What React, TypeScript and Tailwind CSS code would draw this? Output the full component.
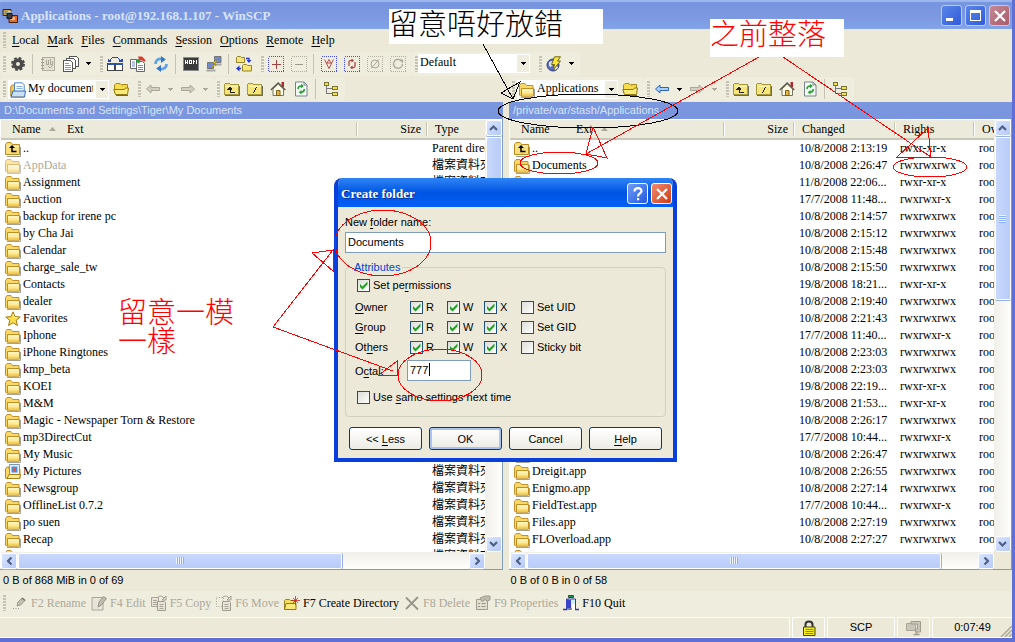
import type { ReactNode } from "react";
import { clsx } from "clsx";

type IconProps = { className?: string };

function Svg({ children, crisp, className }: { children: ReactNode; crisp?: boolean; className?: string }) {
    return (
        <svg
            viewBox="0 0 16 16"
            className={clsx("h-4 w-4 shrink-0", className)}
            fill="none"
            shapeRendering={crisp ? "crispEdges" : undefined}
            aria-hidden="true"
        >
            {children}
        </svg>
    );
}

/* ---------- Folder icons ---------- */

function FolderIcon({ className }: IconProps) {
    return (
        <Svg className={className}>
            <path d="M2 15.500h13.500V7" stroke="#a5a294" />
            <path d="M.5 13V3.500l1.500-2h4l1.500 2h6.500v10.500H1.500z" fill="#f8d867" stroke="#c3922a" />
            <path d="M2.500 14V6.500h12v7.500z" fill="#fdeb9a" stroke="#c08f22" />
            <path d="M3.500 8h10" stroke="#fffbe0" />
            <path d="M3 12.500h11" stroke="#f5d25c" strokeWidth="2" />
        </Svg>
    );
}

function ParentIcon() {
    return (
        <Svg>
            <path d="M2 15.500h13.500V6" stroke="#9c9a8c" />
            <path d="M.5 13.500V3.500l1.500-2h4l1.500 2h7v10z" fill="#f9df7c" stroke="#b98b1f" />
            <path d="M2 5.500h11.500" stroke="#fff3b8" />
            <path d="M4 7l3-3 3 3z" fill="#000" />
            <path d="M7 6v4.500h4.500" stroke="#000" strokeWidth="1.500" />
        </Svg>
    );
}

function StarIcon() {
    return (
        <Svg>
            <path
                d="M8 .8l2 4.800 5.200.4-4 3.400 1.300 5.100L8 11.800l-4.500 2.700 1.300-5.100-4-3.400L6 5.600z"
                fill="#fbdc4a"
                stroke="#a87a10"
            />
            <path d="M8 3l1.200 3.500 3 .5" stroke="#fff6b0" />
        </Svg>
    );
}

function PicturesIcon() {
    return (
        <Svg>
            <path d="M.5 14V5l1.500-2h2v2h11v9.500H1z" fill="#f8d867" stroke="#b98b1f" />
            <path d="M4.500.5h10v10h-10z" fill="#e9f3fb" stroke="#7b97b5" />
            <path d="M6.500 2.500h6v6h-6z" fill="#4c8fdc" />
            <path d="M8 4h3v3H8z" fill="#e2583c" />
            <path d="M2 14.500l2-4h11.500l-1 4z" fill="#fdeb9a" stroke="#b07f14" />
        </Svg>
    );
}

function DocsFolderIcon() {
    return (
        <Svg>
            <path d="M.8 14V4.500L2.500 3h2v11z" fill="#f8c95a" stroke="#b47d1b" />
            <path d="M4.500.8h7.700l2 2v8.700H4.500z" fill="#fff" stroke="#4f86c8" />
            <path d="M6.500 4.500h6M6.500 6.500h6" stroke="#86b0e0" />
            <path d="M1 15l2-6h12.500l-1 6z" fill="#c9e0f7" stroke="#2f6cb4" />
            <path d="M.8 15.300h13.500" stroke="#c98b20" />
        </Svg>
    );
}

function OpenFolderIcon() {
    return (
        <Svg>
            <path d="M1.500 12V4l1.500-1.500h4L8.500 4H13v8" fill="#f7dd4e" stroke="#a78b17" />
            <path d="M9 3.500h5.500V9" fill="#f2d64b" stroke="#a78b17" />
            <path d="M2.500 13.500L.8 8.500h10.500l1.200-1.500h3l-1 6.500z" fill="#f9e97a" stroke="#927a12" />
            <path d="M3 14.500h12" stroke="#6e6540" />
        </Svg>
    );
}

function BarFolder({ children }: { children: ReactNode }) {
    return (
        <Svg crisp>
            <path d="M1 14h14V5" stroke="#6b6b50" />
            <path d="M.5 13.500v-10l1-1h4l1 1h8v10z" fill="#f6e67a" stroke="#a8983c" />
            <path d="M2 5.500h12" stroke="#fff7ab" />
            {children}
        </Svg>
    );
}

function UpFolderIcon() {
    return (
        <BarFolder>
            <path d="M3.500 8.500l2.500-3 2.500 3z" fill="#222" />
            <path d="M6 8v3.500h5" stroke="#222" />
        </BarFolder>
    );
}

function RootFolderIcon() {
    return (
        <BarFolder>
            <path d="M9.500 6l-3 6" stroke="#222" />
        </BarFolder>
    );
}

function HomeIcon() {
    return (
        <Svg>
            <path d="M11.500 1h2.500v5h-2.500z" fill="#b3262b" />
            <path d="M3 8v6.500h10.500V8L8.200 3z" fill="#fdfbe8" stroke="#77745f" />
            <path d="M.8 9L8.200 1.800 15.300 9" stroke="#5b594b" strokeWidth="1.300" />
            <path d="M6.500 9.500h3.500v5H6.500z" fill="#e8b53f" stroke="#7b5e18" />
        </Svg>
    );
}

function RefreshPageIcon() {
    return (
        <Svg>
            <path d="M2.500 1h8.500l3 3v11H2.500z" fill="#f6fbf8" stroke="#76848c" />
            <path d="M11 1v3h3" stroke="#76848c" />
            <path d="M5 8c0-2 1.500-3 3.500-3" stroke="#21a02c" strokeWidth="1.600" />
            <path d="M8 2.800L10.800 5 8 7.200z" fill="#21a02c" />
            <path d="M11.300 8c0 2-1.300 3.200-3.300 3.200" stroke="#21a02c" strokeWidth="1.600" />
            <path d="M8.500 9L5.700 11.200l2.800 2.200z" fill="#21a02c" />
        </Svg>
    );
}

function TreeIcon() {
    return (
        <Svg crisp>
            <path d="M3.500 5v7.500h5M3.500 7.500h5" stroke="#777" />
            <path d="M1.500 1.500h4v3h-4zM9.500 5.500h5v3h-5zM9.500 11.500h5v3h-5z" fill="#f2e054" stroke="#7b7430" />
        </Svg>
    );
}

/* ---------- Main toolbar icons ---------- */

function AppIcon() {
    return (
        <Svg>
            <path d="M1 1.500h8v6H1z" fill="#d7a13f" stroke="#202a35" />
            <path d="M2.500 3h5v3h-5z" fill="#6ea19a" />
            <path d="M7 7.500h8.500v7H7z" fill="#df6b2b" stroke="#43200f" />
            <path d="M8.500 9h4.500v3H8.500z" fill="#f5b88b" />
            <path d="M5 5.500h5v5H5z" fill="#3a3e4c" stroke="#15181f" />
            <path d="M6 5V3.500h3V5" stroke="#cfd3da" />
        </Svg>
    );
}

function GearIcon() {
    return (
        <Svg>
            <circle cx="8" cy="8" r="3.800" stroke="#4a4a4a" strokeWidth="3.600" />
            <circle cx="8" cy="8" r="6" stroke="#4a4a4a" strokeWidth="2" strokeDasharray="2.700 2.010" />
        </Svg>
    );
}

function NotebookIcon() {
    return (
        <Svg crisp>
            <path d="M2.500 1.500h12v13h-12z" fill="#e4e1d2" stroke="#b0ad9f" />
            <path d="M1 3.500h3M1 6.500h3M1 9.500h3M1 12.500h3" stroke="#a09d90" />
            <path d="M6.500 4v4h2V4M10.500 3v5h2V5M8 10l2 2 3-3" stroke="#aaa798" />
        </Svg>
    );
}

function PagesIcon() {
    return (
        <Svg crisp>
            <path d="M6.500.5h7l2 2v8h-9z" fill="#fff" stroke="#555" />
            <path d="M3.500 2.500h7l2 2v8h-9z" fill="#fff" stroke="#555" />
            <path d="M.5 4.500h7l2 2v9h-9z" fill="#fff" stroke="#555" />
            <path d="M2 7.500h4M2 9.500h6M2 11.500h6M2 13.500h6" stroke="#8a94b8" />
        </Svg>
    );
}

function SplitIcon() {
    return (
        <Svg crisp>
            <path d="M.5 7.500h7v7h-7zM8.500 7.500h7v7h-7z" fill="#fff" stroke="#444" />
            <path d="M.5 7h7v2h-7zM8.500 7h7v2h-7z" fill="#2c51b8" />
            <path d="M3 4.500C3.500 2 5 1.500 8 1.500s4.500.5 5 3" stroke="#2c46c0" />
            <path d="M.5 2.500v3.500h4zM15.500 2.500v3.500h-4z" fill="#2c46c0" />
        </Svg>
    );
}

function TransferIcon() {
    return (
        <Svg>
            <path d="M.5 3.500h6v9h-6z" fill="#fff" stroke="#666" />
            <path d="M2 6h3M2 8h3M2 10h3" stroke="#6d8ad0" />
            <path d="M6.500 5.500h6l2 2v8h-8z" fill="#fff" stroke="#666" />
            <path d="M8 9.500h5M8 11.500h5M8 13.500h5" stroke="#6d8ad0" />
            <path d="M8 .5h4l3.500 3.500-1 2-3-2-2 1z" fill="#e03a30" />
            <path d="M5.500 3.500l4-.5 1 3-2.500 1.500z" fill="#22a03a" />
        </Svg>
    );
}

function SyncIcon() {
    return (
        <Svg>
            <path d="M2.500 8c0-3.500 2.500-5.500 6-5" stroke="#5ea2e8" strokeWidth="2.800" />
            <path d="M8 0L12.800 3.500 8 7z" fill="#2f78cc" />
            <path d="M13.500 8c0 3.500-2.500 5.500-6 5" stroke="#5ea2e8" strokeWidth="2.800" />
            <path d="M8 9L3.200 12.600 8 16z" fill="#2f78cc" />
        </Svg>
    );
}

function ConsoleIcon() {
    return (
        <Svg crisp>
            <path d="M.5 1.500h15v13H.5z" fill="#3b3b3b" stroke="#8b8b8b" />
            <path d="M2.500 4v4M4.500 4v4M2.500 6h2M6.500 4.500h2v3h-2zM10.500 8V4M10.500 4.500l2 2M13.500 8V4" stroke="#fff" />
        </Svg>
    );
}

function PuttyIcon() {
    return (
        <Svg>
            <path d="M8.500.5h6.500v6H8.500z" fill="#6f8ad6" stroke="#777" />
            <path d="M8.500 8.500h7" stroke="#a5a5a5" strokeWidth="2" />
            <path d="M1.500 6.500h6v6h-6z" fill="#6f8ad6" stroke="#777" />
            <path d="M.5 14.500h9" stroke="#a5a5a5" strokeWidth="2" />
            <path d="M13 3L6.500 7l3 .8L3 12.500 10.500 9 8 8z" fill="#fbe94a" stroke="#8b7a14" strokeWidth=".6" />
        </Svg>
    );
}

function SyncBrowseIcon() {
    return (
        <Svg>
            <path d="M.5 6.500V1.500l1-1h3l1 1h3v5z" fill="#f6e67a" stroke="#94852a" />
            <path d="M6.500 15v-5.500l1-1h3l1 1h4V15z" fill="#f6e67a" stroke="#94852a" />
            <path d="M10 2.500h3v2M5 12.500H2.500" stroke="#2336c8" strokeWidth="1.300" />
            <path d="M10.500 4h5L13 7zM3.500 9.500v6l-3.500-3z" fill="#2336c8" />
        </Svg>
    );
}

function Marked({ children, off }: { children: ReactNode; off?: boolean }) {
    return (
        <Svg>
            <path
                d="M.5.5h15v15H.5z"
                stroke={off ? "#b3b0a2" : "#4a4fe0"}
                strokeDasharray="1 1"
                shapeRendering="crispEdges"
            />
            {children}
        </Svg>
    );
}

const SelectAddIcon = () => (
    <Marked>
        <path d="M8.500 4v9M4 8.500h9" stroke="#a04040" shapeRendering="crispEdges" />
    </Marked>
);
const SelectRemoveIcon = () => (
    <Marked off>
        <path d="M4 8.500h8" stroke="#9d9a8c" shapeRendering="crispEdges" />
    </Marked>
);
const SelectFilterIcon = () => (
    <Marked>
        <path d="M3.500 3.500L8 12.500l4.500-9M5.500 7h5M6 7l2-3.500L10 7" stroke="#b04040" strokeWidth=".9" />
    </Marked>
);
const SelectInvertIcon = () => (
    <Marked>
        <path d="M5 10V6c0-1 .5-1.500 1.500-1.500H8M11 6v4c0 1-.5 1.500-1.500 1.500H8" stroke="#a83a3a" strokeWidth="1.200" />
        <path d="M7.500 2.500L10 4.500l-2.500 2zM8.500 9.500l-2.500 2 2.500 2z" fill="#a83a3a" />
    </Marked>
);
const SelectClearIcon = () => (
    <Marked off>
        <circle cx="8" cy="8" r="4" stroke="#aaa798" />
        <path d="M4 12.500L12 3.500" stroke="#aaa798" />
    </Marked>
);
const SelectRestoreIcon = () => (
    <Marked off>
        <path d="M11 4.500A4.500 4.500 0 1 0 12.500 8" stroke="#aaa798" strokeWidth="1.300" />
        <path d="M9 3.500h4v4z" fill="#aaa798" />
    </Marked>
);

function GlobeBoltIcon() {
    return (
        <Svg>
            <circle cx="7" cy="9" r="6" fill="#5870c8" stroke="#333a74" />
            <path d="M3 6l3-1 1 3-2 3-2-1zM8 11l3-1 1 2-3 2z" fill="#dde6dc" />
            <path d="M8.500.8h6L11.500 5h3L7 14l1.500-5.500H5.500z" fill="#f9e536" stroke="#6f6612" />
        </Svg>
    );
}

function ArrowIcon({ dir, active }: { dir: "left" | "right"; active?: boolean }) {
    return (
        <Svg className={dir === "right" ? "rotate-180" : ""}>
            <path
                d="M1.500 8L6 4v2.500h8.500v3H6V12z"
                fill={active ? "#a9d0f8" : "#d2cfc2"}
                stroke={active ? "#2d64b8" : "#aaa798"}
            />
        </Svg>
    );
}

/* ---------- Bottom bar icons ---------- */

const RenameIcon = () => (
    <Svg>
        <path d="M1 13.500h1M3.500 13.500h1M6 13.500h1" stroke="#999" />
        <path d="M5 11l1-4 4-4 3 2.500-4.500 4.500z" fill="#c2bfb2" stroke="#9b988b" />
        <path d="M10 3l3 2.500" stroke="#77756a" strokeWidth="1.500" />
    </Svg>
);
const EditIcon = () => (
    <Svg>
        <path d="M1 2.500h11v12.500H1z" fill="#e8e5d8" stroke="#a9a699" />
        <path d="M7 12l1-5 4.500-5.500 3 2-5 6.500z" fill="#bfbcae" stroke="#98958a" />
    </Svg>
);
const CopyIcon = () => (
    <Svg>
        <path d="M.5 2.500h7v9h-7z" fill="#e8e5d8" stroke="#a9a699" />
        <path d="M2 5.500h4M2 7.500h4M2 9.500h4" stroke="#aaa798" />
        <path d="M6.500 6.500h7l1 1v8h-8z" fill="#e8e5d8" stroke="#a09d90" />
        <path d="M8.500 9.500h4M8.500 11.500h4M8.500 13.500h4" stroke="#aaa798" />
        <path d="M6 3c2-2.500 5-2.500 7 0M11 5h4V1z" stroke="#a09d90" />
    </Svg>
);
const MoveIcon = () => (
    <Svg>
        <path d="M.5 2.500h7v9h-7z" stroke="#a9a699" strokeDasharray="1 1.500" />
        <path d="M6.500 6.500h7l1 1v8h-8z" fill="#e8e5d8" stroke="#a09d90" />
        <path d="M8.500 9.500h4M8.500 11.500h4M8.500 13.500h4" stroke="#aaa798" />
        <path d="M6 3c2-2.500 5-2.500 7 0M11 5h4V1z" stroke="#a09d90" />
    </Svg>
);
const NewDirIcon = () => (
    <Svg>
        <path d="M.5 14V5.500l1-1h4l1 1h5V14z" fill="#f6e05a" stroke="#94852a" />
        <path d="M.5 14.500l1.500-6h10v6z" fill="#f9e97a" stroke="#927a12" />
        <path d="M11.500 1v9M7 5.500h9M9 3l5 5M14 3L9 8" stroke="#d42525" strokeWidth=".8" />
    </Svg>
);
const DeleteIcon = () => (
    <Svg>
        <path d="M2 2.500l12 12M14 2L2 14" stroke="#98958a" strokeWidth="1.800" />
    </Svg>
);
const PropertiesIcon = () => (
    <Svg>
        <path d="M1.500 4.500h11v10h-11z" fill="#e2dfd1" stroke="#a09d90" />
        <path d="M3 8.500h2M3 11.500h2M6.500 8.500h4M6.500 11.500h4" stroke="#98958a" />
        <path d="M5 3l5-2h5v4l-3 1-2-1.500-3 2z" fill="#bfbcae" stroke="#a09d90" />
    </Svg>
);
const QuitIcon = () => (
    <Svg>
        <path d="M5.500 .5h5v2h-5z" fill="#1f9a4a" stroke="#1b5b33" />
        <path d="M3.500 4h9v10h-9z" fill="#c9f2fa" stroke="#3238a8" />
        <path d="M3 4l5 1v8l-5 .5z" fill="#3a44c8" />
        <path d="M0 14.500h4M12 14.500h4" stroke="#3238a8" strokeWidth="1.500" />
        <path d="M4 14.500l4-1.500v2z" fill="#777" />
        <path d="M9 9h3v6H9z" fill="#fff" />
    </Svg>
);

function LockIcon() {
    return (
        <Svg>
            <path d="M4.500 7V4.500C4.500.5 11.500.5 11.500 4.500V7" stroke="#333" strokeWidth="2" />
            <path d="M2.500 7h11.500v8.500H2.500z" fill="#f4ec1c" stroke="#4b4808" />
            <path d="M4.500 9.500h8M4.500 11.500h8M4.500 13.500h8" stroke="#8f8a10" />
        </Svg>
    );
}

function ClampIcon() {
    return (
        <Svg>
            <path d="M.5 3.500h9v7h-9z" fill="#c9c6b9" stroke="#aaa798" />
            <path d="M5 1.500h9.500V12H9.500V9h2V4H5z" fill="#c9c6b9" stroke="#a09d90" />
            <path d="M10.500 12v2M7.500 14.500h6" stroke="#a09d90" strokeWidth="1.500" />
        </Svg>
    );
}

/* ---------- Small parts ---------- */

function Grip() {
    return (
        <span className="h-4 w-[3px] shrink-0 bg-[repeating-linear-gradient(to_bottom,#c5c2b4_0_2px,transparent_2px_3px)]" />
    );
}

function Separator() {
    return <span className="mx-[3px] h-5 w-px shrink-0 bg-[#c5c2b2]" />;
}

function Band({ children }: { children: ReactNode }) {
    return <div className="flex h-6 items-center rounded-sm bg-[#efedde] px-[3px]">{children}</div>;
}

function ToolButton({ label, children }: { label: string; children: ReactNode }) {
    return (
        <button type="button" aria-label={label} className="flex h-6 w-[23px] shrink-0 items-center justify-center">
            {children}
        </button>
    );
}

function Caret({ off }: { off?: boolean }) {
    return (
        <svg viewBox="0 0 5 3" className="h-[3px] w-[5px]" shapeRendering="crispEdges" aria-hidden="true">
            <path d="M0 0h5L2.500 3z" fill={off ? "#aaa798" : "#000"} />
        </svg>
    );
}

function DropButton({ label, off }: { label: string; off?: boolean }) {
    return (
        <button type="button" aria-label={label} className="flex h-6 w-3 shrink-0 items-center justify-center">
            <Caret off={off} />
        </button>
    );
}

function Combo({ label, value, icon, className }: { label: string; value: string; icon?: ReactNode; className: string }) {
    return (
        <div className={clsx("relative h-[19px] bg-white", className)}>
            {icon && <span className="pointer-events-none absolute left-0.5 top-0.5">{icon}</span>}
            <select
                aria-label={label}
                className={clsx(
                    "block h-4 w-full appearance-none bg-transparent pr-4 text-xs leading-4 outline-none",
                    icon ? "pl-5" : "pl-0.5"
                )}
            >
                <option>{value}</option>
            </select>
            <span className="pointer-events-none absolute inset-y-px right-px flex w-3 items-center justify-center bg-[#efedde]">
                <Caret />
            </span>
        </div>
    );
}

function Chevron({ className }: { className?: string }) {
    return (
        <svg viewBox="0 0 9 6" className={clsx("h-1.5 w-[9px]", className)} aria-hidden="true">
            <path d="M1 5l3.500-3.500L8 5" fill="none" stroke="#4d6185" strokeWidth="2.200" />
        </svg>
    );
}

function ScrollButton({ label, turn }: { label: string; turn?: string }) {
    return (
        <button
            type="button"
            aria-label={label}
            className="flex h-4 w-4 shrink-0 items-center justify-center rounded-xs border border-white bg-gradient-to-br from-[#dbe5fe] to-[#b5caf8] shadow-[0_1px_0_#98b0e0]"
        >
            <Chevron className={turn} />
        </button>
    );
}

function VScroll({ thumb }: { thumb: string }) {
    return (
        <div className="flex w-[17px] shrink-0 flex-col items-center gap-px bg-gradient-to-r from-[#f0efea] to-[#fefefb]">
            <ScrollButton label="Scroll up" />
            <div className="w-4 flex-1">
                <div
                    className={clsx(
                        "flex items-center justify-center rounded-xs border border-white bg-gradient-to-r from-[#c9d8fc] to-[#b8ccf9] shadow-[0_1px_0_#98b0e0]",
                        thumb
                    )}
                >
                    <span className="h-2 w-[7px] bg-[repeating-linear-gradient(to_bottom,#eef4fe_0_1px,#8cb0f8_1px_2px)]" />
                </div>
            </div>
            <ScrollButton label="Scroll down" turn="rotate-180" />
        </div>
    );
}

function HScroll({ thumb }: { thumb: string }) {
    return (
        <div className="flex h-[17px] shrink-0 bg-[#ece9d8] pr-[17px]">
            <div className="flex flex-1 items-center gap-px bg-gradient-to-b from-[#f0efea] to-[#fefefb]">
                <ScrollButton label="Scroll left" turn="-rotate-90" />
                <div className="h-4 flex-1">
                    <div
                        className={clsx(
                            "flex h-full items-center justify-center rounded-xs border border-white bg-gradient-to-b from-[#c9d8fc] to-[#b8ccf9] shadow-[1px_0_0_#98b0e0]",
                            thumb
                        )}
                    >
                        <span className="h-[7px] w-2 bg-[repeating-linear-gradient(to_right,#eef4fe_0_1px,#8cb0f8_1px_2px)]" />
                    </div>
                </div>
                <ScrollButton label="Scroll right" turn="rotate-90" />
            </div>
        </div>
    );
}

/* ---------- Data ---------- */

const menus = ["Local", "Mark", "Files", "Commands", "Session", "Options", "Remote", "Help"];

type LocalRow = { name: string; icon?: "up" | "star" | "pictures"; type?: string; hidden?: boolean };

const localRows: LocalRow[] = [
    { name: "..", icon: "up", type: "Parent directory" },
    { name: "AppData", hidden: true },
    { name: "Assignment" },
    { name: "Auction" },
    { name: "backup for irene pc" },
    { name: "by Cha Jai" },
    { name: "Calendar" },
    { name: "charge_sale_tw" },
    { name: "Contacts" },
    { name: "dealer" },
    { name: "Favorites", icon: "star" },
    { name: "Iphone" },
    { name: "iPhone Ringtones" },
    { name: "kmp_beta" },
    { name: "KOEI" },
    { name: "M&M" },
    { name: "Magic - Newspaper Torn & Restore" },
    { name: "mp3DirectCut" },
    { name: "My Music" },
    { name: "My Pictures", icon: "pictures" },
    { name: "Newsgroup" },
    { name: "OfflineList 0.7.2" },
    { name: "po suen" },
    { name: "Recap" },
    { name: "" },
];

// name, changed, rights
const remoteRows = [
    ["..", "10/8/2008 2:13:19", "rwxr-xr-x"],
    ["Documents", "10/8/2008 2:26:47", "rwxrwxrwx"],
    ["", "11/8/2008 22:06...", "rwxr-xr-x"],
    ["", "17/7/2008 11:48...", "rwxrwxr-x"],
    ["", "10/8/2008 2:14:57", "rwxrwxrwx"],
    ["", "10/8/2008 2:15:12", "rwxrwxrwx"],
    ["", "10/8/2008 2:15:48", "rwxrwxrwx"],
    ["", "10/8/2008 2:15:50", "rwxrwxrwx"],
    ["", "19/8/2008 18:21...", "rwxr-xr-x"],
    ["", "10/8/2008 2:19:40", "rwxrwxrwx"],
    ["", "10/8/2008 2:21:43", "rwxrwxrwx"],
    ["", "17/7/2008 11:40...", "rwxrwxr-x"],
    ["", "10/8/2008 2:23:03", "rwxrwxrwx"],
    ["", "10/8/2008 2:23:03", "rwxrwxrwx"],
    ["", "19/8/2008 22:19...", "rwxr-xr-x"],
    ["", "19/8/2008 21:53...", "rwxr-xr-x"],
    ["", "10/8/2008 2:26:17", "rwxrwxrwx"],
    ["", "17/7/2008 10:44...", "rwxrwxr-x"],
    ["", "10/8/2008 2:26:47", "rwxrwxrwx"],
    ["Dreigit.app", "10/8/2008 2:26:55", "rwxrwxrwx"],
    ["Enigmo.app", "10/8/2008 2:27:14", "rwxrwxrwx"],
    ["FieldTest.app", "17/7/2008 10:44...", "rwxrwxr-x"],
    ["Files.app", "10/8/2008 2:27:19", "rwxrwxrwx"],
    ["FLOverload.app", "10/8/2008 2:27:27", "rwxrwxrwx"],
    ["", "", ""],
];

const commands = [
    { label: "F2 Rename", icon: RenameIcon },
    { label: "F4 Edit", icon: EditIcon },
    { label: "F5 Copy", icon: CopyIcon },
    { label: "F6 Move", icon: MoveIcon },
    { label: "F7 Create Directory", icon: NewDirIcon, on: true },
    { label: "F8 Delete", icon: DeleteIcon },
    { label: "F9 Properties", icon: PropertiesIcon },
    { label: "F10 Quit", icon: QuitIcon, on: true },
];

/* ---------- Bars ---------- */

function TitleBar() {
    const box =
        "flex h-[21px] w-[21px] items-center justify-center rounded-[3px] border border-[#b9cbf3] bg-gradient-to-br";
    return (
        <header className="flex h-[29px] shrink-0 items-center bg-gradient-to-b from-[#7695df] via-[#7b97e0] to-[#82a4e8] px-0.5 pt-0.5 shadow-[inset_0_2px_1px_#9db8ee]">
            <AppIcon />
            <h1 className="ml-[3px] flex-1 text-[13px] font-bold text-[#d8e4f8]">
                Applications - root@192.168.1.107 - WinSCP
            </h1>
            <div className="flex gap-[3px]">
                <button type="button" aria-label="Minimize" className={clsx(box, "from-[#5b86ea] to-[#2f5bd6]")}>
                    <span className="mr-1 mt-2 h-[3px] w-[7px] bg-white" />
                </button>
                <button type="button" aria-label="Maximize" className={clsx(box, "from-[#5b86ea] to-[#2f5bd6]")}>
                    <span className="h-[11px] w-[11px] border border-t-[3px] border-white" />
                </button>
                <button type="button" aria-label="Close" className={clsx(box, "from-[#c58a98] to-[#a85a68]")}>
                    <svg viewBox="0 0 12 12" className="h-3 w-3" aria-hidden="true">
                        <path d="M1 1l10 10M11 1L1 11" stroke="#fff" strokeWidth="2.200" />
                    </svg>
                </button>
            </div>
        </header>
    );
}

function MenuBar() {
    return (
        <nav className="flex h-[22px] shrink-0 items-center pl-[3px]">
            <Grip />
            <div className="ml-1.5 flex gap-2">
                {menus.map((item) => (
                    <button key={item} type="button" className="text-xs">
                        <span className="underline underline-offset-2">{item[0]}</span>
                        {item.slice(1)}
                    </button>
                ))}
            </div>
        </nav>
    );
}

function MainToolbar() {
    return (
        <div className="flex h-[25px] shrink-0 items-center">
            <Band>
                <Grip />
                <ToolButton label="Preferences"><GearIcon /></ToolButton>
                <Separator />
                <ToolButton label="Address book"><NotebookIcon /></ToolButton>
                <ToolButton label="Queue"><PagesIcon /></ToolButton>
                <DropButton label="Queue options" />
            </Band>
            <Band>
                <Grip />
                <ToolButton label="Compare"><SplitIcon /></ToolButton>
                <ToolButton label="Keep up to date"><TransferIcon /></ToolButton>
                <ToolButton label="Synchronize"><SyncIcon /></ToolButton>
                <Separator />
                <ToolButton label="Console"><ConsoleIcon /></ToolButton>
                <ToolButton label="Terminal"><PuttyIcon /></ToolButton>
                <Separator />
                <ToolButton label="Synchronize browsing"><SyncBrowseIcon /></ToolButton>
            </Band>
            <Band>
                <Grip />
                <ToolButton label="Select"><SelectAddIcon /></ToolButton>
                <ToolButton label="Unselect"><SelectRemoveIcon /></ToolButton>
                <Separator />
                <ToolButton label="Select all"><SelectFilterIcon /></ToolButton>
                <ToolButton label="Invert selection"><SelectInvertIcon /></ToolButton>
                <ToolButton label="Clear selection"><SelectClearIcon /></ToolButton>
                <ToolButton label="Restore selection"><SelectRestoreIcon /></ToolButton>
            </Band>
            <Band>
                <Grip />
                <Combo label="Transfer settings" value="Default" className="w-28" />
            </Band>
            <Band>
                <span className="w-[3px]" />
                <Grip />
                <ToolButton label="Connect"><GlobeBoltIcon /></ToolButton>
                <DropButton label="Sessions" />
            </Band>
        </div>
    );
}

function PanelToolbar({ label, value, icon, back }: { label: string; value: string; icon: ReactNode; back?: boolean }) {
    return (
        <div className="flex h-[26px] min-w-0 items-center">
            <Band>
                <Grip />
                <Combo label={label} value={value} icon={icon} className="ml-0.5 w-[101px]" />
                <ToolButton label="Open directory"><OpenFolderIcon /></ToolButton>
            </Band>
            <Band>
                <Grip />
                <ToolButton label="Back"><ArrowIcon dir="left" active={back} /></ToolButton>
                <DropButton label="Back history" off={!back} />
                <ToolButton label="Forward"><ArrowIcon dir="right" /></ToolButton>
                <DropButton label="Forward history" off />
            </Band>
            <Band>
                <Grip />
                <ToolButton label="Parent directory"><UpFolderIcon /></ToolButton>
                <ToolButton label="Root directory"><RootFolderIcon /></ToolButton>
                <ToolButton label="Home directory"><HomeIcon /></ToolButton>
                <ToolButton label="Refresh"><RefreshPageIcon /></ToolButton>
                <Separator />
                <ToolButton label="Tree"><TreeIcon /></ToolButton>
            </Band>
        </div>
    );
}

/* ---------- File panels ---------- */

const th = "relative h-5 border-b-2 border-[#cbc7b8] bg-[#ebeadb] p-0 text-left font-normal";

function HeadCell({ children, right }: { children: ReactNode; right?: boolean }) {
    return (
        <th className={clsx(th, right ? "pr-[5px] text-right" : "pl-[9px]")}>
            <span className="absolute inset-y-0.5 left-0 w-0.5 border-l border-[#c7c5b2] bg-white" />
            {children}
        </th>
    );
}

function SortMark() {
    return (
        <svg viewBox="0 0 7 4" className="h-1 w-[7px]" aria-hidden="true">
            <path d="M0 4h7L3.500 0z" fill="#aca899" />
        </svg>
    );
}

function NameHead({ sortBy }: { sortBy: "name" | "ext" }) {
    return (
        <th className={clsx(th, "pl-[11px]")}>
            <span className="flex items-center">
                <span className="flex w-[55px] items-center gap-2">Name {sortBy === "name" && <SortMark />}</span>
                <span className="flex items-center gap-2">Ext {sortBy === "ext" && <SortMark />}</span>
            </span>
        </th>
    );
}

function LocalIcon({ row }: { row: LocalRow }) {
    if (row.icon === "up") return <ParentIcon />;
    if (row.icon === "star") return <StarIcon />;
    if (row.icon === "pictures") return <PicturesIcon />;
    return <FolderIcon className={row.hidden ? "opacity-60" : ""} />;
}

function Panel({ path, thumbV, thumbH, children }: { path: string; thumbV: string; thumbH: string; children: ReactNode }) {
    return (
        <section className="flex min-h-0 min-w-0 flex-col">
            <div className="h-[17px] shrink-0 truncate bg-[#7a96df] pl-1 font-['Liberation_Sans',sans-serif] text-[11px] leading-[17px] text-[#d8e4f8]">
                {path}
            </div>
            <div className="flex min-h-0 flex-1 flex-col border-b border-r border-[#7f9db9] bg-white pl-px pt-px">
                <div className="flex min-h-0 flex-1">
                    <div className="min-w-0 flex-1 overflow-hidden">{children}</div>
                    <VScroll thumb={thumbV} />
                </div>
                <HScroll thumb={thumbH} />
            </div>
        </section>
    );
}

const cell = "h-[17px] overflow-hidden whitespace-nowrap p-0 pl-1.5 leading-[17px]";

function LocalPanel() {
    return (
        <Panel path="D:\Documents and Settings\Tiger\My Documents" thumbV="h-[35%]" thumbH="w-[72%]">
            <table className="w-full table-fixed border-separate border-spacing-0 text-xs">
                <colgroup>
                    <col />
                    <col className="w-[70px]" />
                    <col className="w-[59px]" />
                </colgroup>
                <thead>
                    <tr>
                        <NameHead sortBy="name" />
                        <HeadCell right>Size</HeadCell>
                        <HeadCell>Type</HeadCell>
                    </tr>
                </thead>
                <tbody>
                    {localRows.map((row, i) => (
                        <tr key={i}>
                            <td className="h-[17px] p-0 pl-1 leading-[17px]">
                                <span className={clsx("flex items-center gap-0.5", row.hidden && "text-[#aca899]")}>
                                    <LocalIcon row={row} />
                                    {row.name}
                                </span>
                            </td>
                            <td />
                            <td className={cell}>{row.type ?? "檔案資料夾"}</td>
                        </tr>
                    ))}
                </tbody>
            </table>
        </Panel>
    );
}

function RemotePanel() {
    return (
        <Panel path="/private/var/stash/Applications" thumbV="h-[41%]" thumbH="w-[92%]">
            <table className="w-full table-fixed border-separate border-spacing-0 text-xs">
                <colgroup>
                    <col />
                    <col className="w-[70px]" />
                    <col className="w-[101px]" />
                    <col className="w-[79px]" />
                    <col className="w-[21px]" />
                </colgroup>
                <thead>
                    <tr>
                        <NameHead sortBy="ext" />
                        <HeadCell right>Size</HeadCell>
                        <HeadCell>Changed</HeadCell>
                        <HeadCell>Rights</HeadCell>
                        <HeadCell>
                            <span className="block overflow-hidden">Owner</span>
                        </HeadCell>
                    </tr>
                </thead>
                <tbody>
                    {remoteRows.map(([name, changed, rights], i) => (
                        <tr key={i}>
                            <td className="h-[17px] p-0 pl-1 leading-[17px]">
                                <span className="flex items-center gap-0.5">
                                    {name === ".." ? <ParentIcon /> : <FolderIcon />}
                                    {name}
                                </span>
                            </td>
                            <td />
                            <td className={cell}>{changed}</td>
                            <td className={cell}>{rights}</td>
                            <td className={cell}>{changed && "root"}</td>
                        </tr>
                    ))}
                </tbody>
            </table>
        </Panel>
    );
}

/* ---------- Dialog ---------- */

function Check({ label, checked, hot = 0 }: { label: string; checked?: boolean; hot?: number }) {
    return (
        <label className="flex items-center gap-[3px] whitespace-nowrap">
            <span className="relative h-[13px] w-[13px]">
                <input
                    type="checkbox"
                    defaultChecked={checked}
                    className="peer block h-[13px] w-[13px] appearance-none border border-[#1c5180] bg-gradient-to-br from-[#dcdcd7] to-white"
                />
                <svg
                    viewBox="0 0 13 13"
                    className="pointer-events-none absolute inset-0 hidden h-[13px] w-[13px] peer-checked:block"
                    aria-hidden="true"
                >
                    <path d="M3 5v3l2.500 2.500L10.500 5.500V2.500L5.500 7.500z" fill="#21a121" />
                </svg>
            </span>
            <span>
                {label.slice(0, hot)}
                {hot > 0 && <span className="underline underline-offset-2">{label[hot]}</span>}
                {label.slice(hot > 0 ? hot + 1 : 0)}
            </span>
        </label>
    );
}

const groups = [
    { pre: "", key: "O", post: "wner", extra: "Set UID" },
    { pre: "", key: "G", post: "roup", extra: "Set GID" },
    { pre: "Ot", key: "h", post: "ers", extra: "Sticky bit" },
];

function CreateFolderDialog() {
    const button =
        "h-[23px] w-[73px] rounded-[3px] border border-[#003c74] bg-gradient-to-b from-white to-[#ecebe5]";
    const titleButton = "flex h-[21px] w-[21px] items-center justify-center rounded-[3px] border border-white bg-gradient-to-br";
    return (
        <div
            role="dialog"
            aria-labelledby="dialog-title"
            className="absolute left-[334px] top-[178px] w-[343px] overflow-hidden rounded-t-lg border-x-4 border-b-4 border-[#0a3fdc] bg-[#ece9d8] font-['Liberation_Sans',sans-serif] text-[11px] leading-[14px]"
        >
            <div className="-mx-1 flex h-[29px] items-center gap-[3px] bg-gradient-to-b from-[#2f84f5] via-[#0054e3] to-[#0060f8] pl-[7px] pr-[5px] pt-0.5">
                <h2
                    id="dialog-title"
                    className="flex-1 font-['Liberation_Serif',serif] text-[13px] font-bold text-white [text-shadow:1px_1px_#0f2f8f]"
                >
                    Create folder
                </h2>
                <button type="button" aria-label="Context help" className={clsx(titleButton, "from-[#6f9bf5] to-[#2458e0]")}>
                    <svg viewBox="0 0 12 14" className="h-3.5 w-3" aria-hidden="true">
                        <path d="M2.500 4.500C2.500 0 9.500 0 9.500 4c0 2.500-3.500 2.500-3.500 5.500" fill="none" stroke="#fff" strokeWidth="2.200" />
                        <path d="M5 11h2.200v2.200H5z" fill="#fff" />
                    </svg>
                </button>
                <button type="button" aria-label="Close dialog" className={clsx(titleButton, "from-[#f08a6a] to-[#cc3a12]")}>
                    <svg viewBox="0 0 12 12" className="h-3 w-3" aria-hidden="true">
                        <path d="M1 1l10 10M11 1L1 11" stroke="#fff" strokeWidth="2.200" />
                    </svg>
                </button>
            </div>

            <form className="px-[7px] pb-2 pt-2" onSubmit={(e) => e.preventDefault()}>
                <label htmlFor="folder-name" className="block">
                    New <span className="underline underline-offset-2">f</span>older name:
                </label>
                <input
                    id="folder-name"
                    defaultValue="Documents"
                    className="mt-[3px] block h-[21px] w-full border border-[#7f9db9] bg-white px-0.5 pb-0.5 outline-none"
                />

                <fieldset className="mt-[7px] rounded-sm border border-[#d0d0bf] pb-3 pl-[9px]">
                    <legend className="ml-[-3px] px-0.5 text-[#0046d5]">Attributes</legend>
                    <div className="mt-1 pl-0.5">
                        <Check label="Set permissions" checked hot={6} />
                    </div>
                    <div className="mt-[5px]">
                        {groups.map((g) => (
                            <div key={g.extra} className="grid h-5 grid-cols-[55px_37px_37px_37px_1fr] items-center">
                                <span>
                                    {g.pre}
                                    <span className="underline underline-offset-2">{g.key}</span>
                                    {g.post}
                                </span>
                                <Check label="R" checked />
                                <Check label="W" checked />
                                <Check label="X" checked />
                                <Check label={g.extra} />
                            </div>
                        ))}
                    </div>
                    <div className="mt-[3px] flex items-center">
                        <label htmlFor="octal" className="w-[52px]">
                            O<span className="underline underline-offset-2">c</span>tal:
                        </label>
                        <span className="relative">
                            <input
                                id="octal"
                                defaultValue="777"
                                className="block h-[21px] w-16 border border-[#7f9db9] bg-white px-0.5 pb-0.5 outline-none"
                            />
                            <span className="absolute left-[22px] top-[3px] h-[13px] w-px bg-black" />
                        </span>
                    </div>
                    <div className="mt-[9px] pl-0.5">
                        <Check label="Use same settings next time" hot={4} />
                    </div>
                </fieldset>

                <div className="mt-[10px] flex gap-[7px] pl-1">
                    <button type="button" className={button}>
                        &lt;&lt; <span className="underline underline-offset-2">L</span>ess
                    </button>
                    <button type="submit" className={clsx(button, "shadow-[inset_0_0_0_2px_#a9c3f2]")}>
                        OK
                    </button>
                    <button type="button" className={button}>
                        Cancel
                    </button>
                    <button type="button" className={button}>
                        <span className="underline underline-offset-2">H</span>elp
                    </button>
                </div>
            </form>
        </div>
    );
}

/* ---------- Hand-drawn notes ---------- */

function Notes() {
    const text = "absolute whitespace-nowrap font-['Noto_Sans_CJK_TC',sans-serif] text-[29px] font-light";
    return (
        <div className="pointer-events-none absolute inset-0">
            <p className={clsx(text, "left-[389px] top-[9px] h-[35px] w-[214px] bg-white leading-[27px] text-black")}>
                留意唔好放錯
            </p>
            <p className={clsx(text, "left-[710px] top-[19px] h-[38px] w-[134px] bg-white leading-[27px] text-[#ff0000]")}>
                之前整落
            </p>
            <p className={clsx(text, "left-[118px] top-[296px] leading-[29px] text-[#ff0000]")}>
                留意一模
                <br />
                一樣
            </p>
            <svg viewBox="0 0 1015 642" className="absolute left-0 top-0 h-[642px] w-[1015px]" fill="none" aria-hidden="true">
                <g stroke="#000" shapeRendering="crispEdges">
                    <path d="M483 44l30 55L520 82 501 93l12 6" />
                    <ellipse cx="588" cy="111" rx="90" ry="17" />
                </g>
                <g stroke="#f00" shapeRendering="crispEdges">
                    <path d="M759 57L586 154l7-27 14 31-21-4" />
                    <path d="M783 57l148 100-3-29-31 29h34" />
                    <ellipse cx="559" cy="163" rx="39" ry="11" />
                    <ellipse cx="930" cy="167" rx="37" ry="10" />
                    <ellipse cx="383" cy="243" rx="48" ry="33" />
                    <ellipse cx="440" cy="375" rx="42" ry="26" />
                    <path d="M333 250L273 327l120 44" />
                    <path d="M333 250l-21 3 21 18z" />
                    <path d="M379 375h18v-14z" />
                </g>
            </svg>
        </div>
    );
}

/* ---------- Footer ---------- */

function CommandBar() {
    return (
        <div className="flex h-[26px] shrink-0 items-center bg-[#efedde] pb-0.5 pl-[3px]">
            <Grip />
            <div className="ml-1.5 flex gap-[5px]">
                {commands.map(({ label, icon: Icon, on }) => (
                    <button
                        key={label}
                        type="button"
                        className={clsx("flex items-center gap-[3px] whitespace-nowrap text-xs", on ? "text-black" : "text-[#aca899]")}
                    >
                        <Icon />
                        {label}
                    </button>
                ))}
            </div>
        </div>
    );
}

function StatusBar() {
    const pane = "flex items-center justify-center border border-white";
    return (
        <footer className="flex h-[21px] shrink-0 gap-0.5 font-['Liberation_Sans',sans-serif] text-[11px]">
            <div className={clsx(pane, "flex-1 border-l-0")} />
            <div className={clsx(pane, "w-[33px]")}><LockIcon /></div>
            <div className={clsx(pane, "w-[68px]")}>SCP</div>
            <div className={clsx(pane, "w-[33px]")}><ClampIcon /></div>
            <div className={clsx(pane, "relative w-20 border-r-0")}>
                0:07:49
                <svg viewBox="0 0 12 12" className="absolute bottom-0 right-0 h-3 w-3" aria-hidden="true">
                    <path d="M1 12L12 1M5 12l7-7M9 12l3-3" stroke="#aca899" strokeWidth="1.500" />
                </svg>
            </div>
        </footer>
    );
}

export default function App() {
    return (
        <div className="relative flex h-screen w-full flex-col overflow-hidden border-b-4 border-r-[3px] border-[#5f6fd6] bg-[#ece9d8] font-['Liberation_Serif','Noto_Sans_CJK_TC',serif] text-black">
            <TitleBar />
            <MenuBar />
            <MainToolbar />
            <div className="grid shrink-0 grid-cols-2 gap-x-1.5">
                <PanelToolbar label="Local drive" value="My documents" icon={<DocsFolderIcon />} />
                <PanelToolbar label="Remote directory" value="Applications" icon={<FolderIcon />} back />
            </div>
            <main className="grid min-h-0 flex-1 grid-cols-2 grid-rows-1 gap-x-1.5">
                <LocalPanel />
                <RemotePanel />
            </main>
            <div className="grid h-[21px] shrink-0 grid-cols-2 items-center gap-x-1.5 pl-[3px] font-['Liberation_Sans',sans-serif] text-[11px]">
                <p>0 B of 868 MiB in 0 of 69</p>
                <p>0 B of 0 B in 0 of 58</p>
            </div>
            <CommandBar />
            <StatusBar />
            <CreateFolderDialog />
            <Notes />
        </div>
    );
}
